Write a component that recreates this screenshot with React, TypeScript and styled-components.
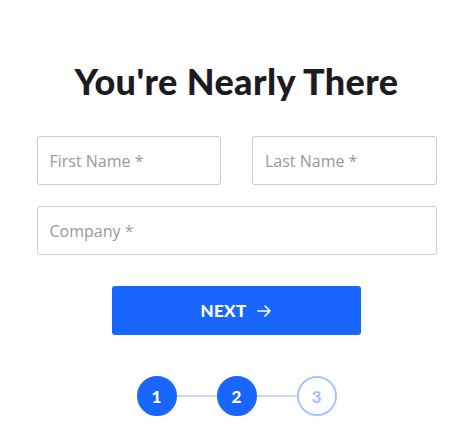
import styled, { createGlobalStyle } from 'styled-components';

const GlobalStyle = createGlobalStyle`
  body {
    margin: 0;
    background: #ffffff;
    font-family: "Open Sans", "Liberation Sans", sans-serif;
  }
`;

const Page = styled.main`
  width: 400px;
  margin: 0 auto;
  padding-top: 58px;
  display: flex;
  flex-direction: column;
  align-items: center;
`;

const Title = styled.h1`
  margin: 0 0 31px;
  font-family: Lato, "Liberation Sans", sans-serif;
  font-weight: 900;
  font-size: 36px;
  line-height: 47px;
  color: #1c1b22;
  letter-spacing: 0.4px;
`;

const Form = styled.form`
  width: 100%;
  display: flex;
  flex-direction: column;
  gap: 21px;
`;

const Row = styled.div`
  display: flex;
  gap: 31px;
`;

const Input = styled.input`
  flex: 1;
  min-width: 0;
  height: 49px;
  box-sizing: border-box;
  padding: 0 12px;
  border: 1px solid #cccccc;
  border-radius: 3px;
  font-family: "Open Sans", sans-serif;
  font-size: 16px;
  color: #333;
  &::placeholder {
    color: #999999;
  }
`;

const NextButton = styled.button`
  margin-top: 10px;
  align-self: center;
  width: 249px;
  height: 49px;
  border: none;
  border-radius: 3px;
  background: #1966ff;
  color: #ffffff;
  font-family: Lato, "Liberation Sans", sans-serif;
  font-weight: 900;
  font-size: 17px;
  letter-spacing: 0.3px;
  display: flex;
  align-items: center;
  justify-content: center;
  gap: 10px;
`;

const Steps = styled.div`
  margin-top: 41px;
  display: flex;
  align-items: center;
`;

const StepGroup = styled.div`
  display: flex;
  align-items: center;
`;

const Step = styled.div<{ $active: boolean }>`
  width: 40px;
  height: 40px;
  box-sizing: border-box;
  border-radius: 50%;
  border: 2px solid ${(p) => (p.$active ? '#1966ff' : '#a7c4ff')};
  background: ${(p) => (p.$active ? '#1966ff' : '#ffffff')};
  color: ${(p) => (p.$active ? '#ffffff' : '#a7c4ff')};
  display: flex;
  align-items: center;
  justify-content: center;
  font-family: Lato, "Liberation Sans", sans-serif;
  font-weight: 900;
  font-size: 17px;
`;

const Connector = styled.div`
  width: 40px;
  height: 2px;
  background: #c9dbff;
`;

const steps = [1, 2, 3];
const current = 2;

export default function App() {
  return (
    <Page>
      <GlobalStyle />
      <Title>You're Nearly There</Title>
      <Form onSubmit={(e) => e.preventDefault()}>
        <Row>
          <Input placeholder="First Name *" />
          <Input placeholder="Last Name *" />
        </Row>
        <Row>
          <Input placeholder="Company *" />
        </Row>
        <NextButton type="submit">
          NEXT
          <svg width="16" height="16" viewBox="0 0 16 16" fill="none" stroke="#fff" strokeWidth="1.6" strokeLinecap="round" strokeLinejoin="round">
            <path d="M2 8h12M9 3l5 5-5 5" />
          </svg>
        </NextButton>
      </Form>
      <Steps>
        {steps.map((n, i) => (
          <StepGroup key={n}>
            {i > 0 && <Connector />}
            <Step $active={n <= current}>{n}</Step>
          </StepGroup>
        ))}
      </Steps>
    </Page>
  );
}
